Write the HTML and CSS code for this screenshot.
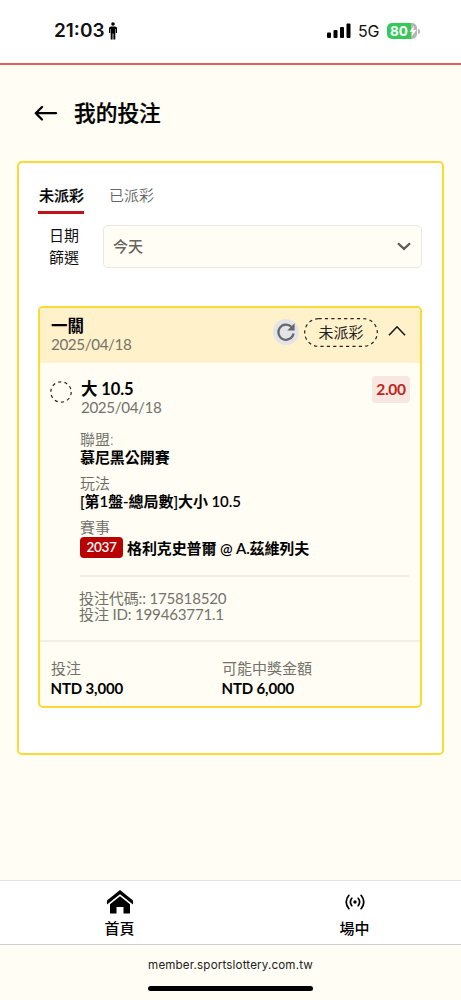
FILE: index.html
```html
<!DOCTYPE html>
<html lang="zh-Hant">
<head>
<meta charset="utf-8">
<meta name="viewport" content="width=device-width, initial-scale=1">
<title>我的投注</title>
<link rel="stylesheet" href="styles.css">
</head>
<body>
<div class="screen">
  <header class="status">
    <span class="clock">21:03</span>
    <svg class="person" width="10" height="18" viewBox="0 0 10 18"><circle cx="5" cy="2" r="1.8"/><path d="M3 4.500h4q2 0 2 2v4.600h-1.200V7h-.5v10.500H5.400v-6h-.8v6H2.700V7h-.5v4.100H1V6.500q0-2 2-2z"/></svg>
    <svg class="signal" width="24" height="16" viewBox="0 0 24 16"><rect x="0" y="9.500" width="4" height="5.500" rx="1"/><rect x="6.500" y="7" width="4" height="8" rx="1"/><rect x="13" y="4" width="4" height="11" rx="1"/><rect x="19.500" y="0.500" width="4" height="14.500" rx="1"/></svg>
    <span class="network">5G</span>
    <span class="battery"><span class="level">80</span>
      <svg class="bolt" width="8" height="12" viewBox="0 0 8 12"><path d="M5 0.500L0.500 6.800H3.500L2.500 11.500L7.500 5H4.300z" fill="#fff"/></svg>
    </span>
    <span class="battery-tip"></span>
  </header>

  <div class="title-bar">
    <svg width="24" height="18" viewBox="0 0 24 18" fill="none" stroke="#000" stroke-width="2.300" stroke-linecap="round" stroke-linejoin="round"><path d="M22 9.200H1.800M8 3L1.800 9.200L8 15.500"/></svg>
    <h1>我的投注</h1>
  </div>

  <main class="panel">
    <nav class="tabs"><a class="tab active">未派彩</a><a class="tab">已派彩</a></nav>
    <div class="filter">
      <label>日期<br>篩選</label>
      <div class="select"><span>今天</span>
        <svg width="14" height="9" viewBox="0 0 14 9" fill="none" stroke="#5c5a56" stroke-width="2.200"><path d="M1 1.300L7 6.900L13 1.300"/></svg>
      </div>
    </div>

    <article class="bet">
      <div class="bet-head">
        <div class="bet-name"><strong>一關</strong><span class="date">2025/04/18</span></div>
        <span class="refresh"><svg width="20" height="20" viewBox="0 0 20 20"><path d="M15.600 5A7.600 7.600 0 1 0 17.500 11.500" fill="none" stroke="#66676b" stroke-width="2.200"/><path d="M18.600 1.200V8.500H11.300z" fill="#66676b"/></svg></span>
        <span class="state"><svg class="dash" width="74" height="29"><rect x=".7" y=".7" width="72.600" height="27.600" rx="13.800"/></svg>未派彩</span>
        <svg class="fold" width="18" height="12" viewBox="0 0 18 12" fill="none" stroke="#171717" stroke-width="1.600"><path d="M1 10.200L9 1.800L17 10.200"/></svg>
      </div>
      <div class="bet-body">
        <svg class="ring" width="22" height="22" viewBox="0 0 22 22"><circle cx="11" cy="11" r="10.200"/></svg>
        <div class="details">
          <div class="pick"><div><strong>大 10.5</strong><span class="date">2025/04/18</span></div><b class="odds">2.00</b></div>
          <dl>
            <dt>聯盟:</dt><dd>慕尼黑公開賽</dd>
            <dt>玩法</dt><dd>[第1盤-總局數]大小 10.5</dd>
            <dt>賽事</dt><dd class="match"><span class="code">2037</span><span>格利克史普爾 @ A.茲維列夫</span></dd>
          </dl>
          <div class="ids"><div>投注代碼:: 175818520</div><div>投注 ID: 199463771.1</div></div>
        </div>
      </div>
      <div class="totals">
        <div><span>投注</span><b>NTD 3,000</b></div>
        <div><span>可能中獎金額</span><b>NTD 6,000</b></div>
      </div>
    </article>
  </main>

  <nav class="bottom-nav">
    <a><svg width="26" height="24" viewBox="0 0 26 24"><path d="M13 0L26 10.500V14.500L13 4.200L0 14.500V10.500z"/><path d="M13 6.300L23 14.300V23.500H16.500V17H9.500V23.500H3V14.300z"/></svg><span>首頁</span></a>
    <a class="live"><svg width="20" height="16" viewBox="0 0 20 16" fill="none" stroke="#000" stroke-width="1.700" stroke-linecap="round"><circle cx="10" cy="8" r="1.700" fill="#000" stroke="none"/><path d="M6.800 4.300Q4 8 6.800 11.700M13.200 4.300Q16 8 13.200 11.700M3.900 1.300Q-1.500 8 3.900 14.700M16.100 1.300Q21.500 8 16.100 14.700"/></svg><span>場中</span></a>
  </nav>
  <footer class="browser"><span>member.sportslottery.com.tw</span><i class="home-bar"></i></footer>
</div>
</body>
</html>
```
FILE: styles.css
```css
* { box-sizing: border-box; }
body { margin: 0; background: #fffdf4; color: #111; font-family: Lato, "Noto Sans CJK TC", sans-serif; font-size: 15px; }
svg { display: block; flex: none; }
.screen { width: 461px; height: 1000px; display: flex; flex-direction: column; overflow: hidden; white-space: nowrap; }

.status { height: 65px; flex: none; display: flex; align-items: center; padding: 1px 41px 2px 54px; background: #fff; border-bottom: 2px solid #e45c5c; font-family: Inter, sans-serif; }
.clock { font-size: 19px; font-weight: 600; line-height: 24px; width: 54px; }
.signal { margin-left: auto; }
.network { font-size: 16px; letter-spacing: -.2px; margin: 0 8px 0 7px; width: 21px; }
.battery { width: 30px; height: 16px; border-radius: 5px; background: linear-gradient(90deg, #34ca59 24px, #b5b5b5 24px); display: flex; align-items: center; padding-left: 3px; color: #fff; }
.level { font-size: 13.500px; font-weight: 700; line-height: 16px; width: 18px; }
.bolt { margin-left: 1px; }
.battery-tip { width: 2px; height: 5px; border-radius: 0 2px 2px 0; background: #b5b5b5; margin-left: 1px; }

.title-bar { height: 96px; flex: none; padding: 0 0 0 34px; display: flex; align-items: center; gap: 16px; }
.title-bar h1 { margin: 0; font-size: 21.700px; line-height: 32px; font-weight: 500; color: #000; -webkit-text-stroke: .25px #000; }

.panel { margin: 0 17px; height: 594px; flex: none; border: 2px solid #ffd933; border-radius: 5px; background: #fff; padding: 18px 20px 0 19px; }
.tabs { display: flex; gap: 25px; margin-bottom: 11px; }
.tab { height: 33px; line-height: 28px; color: #666; font-weight: 350; border-bottom: 3.500px solid transparent; }
.tab.active { padding-left: 1px; color: #000; font-weight: 500; -webkit-text-stroke: .2px #000; border-color: #c21217; }
.filter { display: flex; height: 43px; }
.filter label { width: 65px; padding-left: 11px; line-height: 22px; margin-top: -1px; }
.select { flex: 1; border: 1px solid #eae6e2; border-radius: 5px; background: #fffdf4; padding: 0 10px 0 9px; display: flex; align-items: center; justify-content: space-between; color: #666560; font-weight: 500; }
.select span { margin-top: -2px; }

.bet { margin-top: 38px; height: 402px; border: 2px solid #ffd933; border-radius: 5px; background: #fffdf4; overflow: hidden; }
.bet-head { height: 55px; background: #fff1ca; padding: 0 14px 7px 11px; display: flex; align-items: center; }
.bet-name { display: flex; flex-direction: column; margin-right: auto; padding-top: 4px; }
strong { font-size: 16.500px; line-height: 19px; font-weight: 700; color: #000; display: block; }
.date { display: block; font-size: 15.200px; letter-spacing: -.38px; line-height: 16px; color: #74736b; }
.refresh { width: 26px; height: 26px; border-radius: 50%; background: #e3e4e8; display: grid; place-items: center; margin-top: -1px; }
.state { position: relative; width: 74px; height: 29px; line-height: 28px; text-align: center; margin: 0 10px 0 5px; color: #222; }
.dash { position: absolute; inset: 0; }
.dash rect, .ring circle { fill: none; stroke: #222; stroke-width: 1.200; stroke-dasharray: 3.200 3.200; }
.fold { margin-top: -2px; }
.bet-body { height: 277px; display: flex; padding: 17px 11px 0 10px; gap: 8px; }
.ring { margin-top: 1px; }
.details { flex: 1; }
.pick { display: flex; justify-content: space-between; height: 50px; }
.pick strong { padding-left: 1px; letter-spacing: -.1px; }
.pick .date { padding-left: 1px; }
.odds { width: 38px; height: 27px; margin: -4px -1px 0 0; border-radius: 4px; background: #f8e7e0; color: #bd2520; text-align: center; line-height: 27px; font-size: 15.500px; letter-spacing: -.3px; }
dl { margin: 0; color: #000; }
dt { line-height: 18px; color: #6c6b64; font-weight: 350; }
dd { margin: 0 0 8px; line-height: 18px; font-weight: 600; letter-spacing: -.07px; }
.match { display: flex; align-items: center; height: 22px; gap: 4px; margin: 0 0 17px; }
.match > span:last-child { padding-top: 1px; letter-spacing: -.12px; }
.code { width: 43px; height: 21px; border-radius: 4px; background: #b90000; color: #fff; text-align: center; font-size: 13.500px; line-height: 21px; letter-spacing: -.3px; }
.ids { border-top: 2px solid #f1ede7; padding-top: 13px; text-indent: -1px; line-height: 16px; color: #74736b; font-size: 15.100px; letter-spacing: -.2px; }
.totals { border-top: 2px solid #f1ede7; height: 66px; display: flex; padding: 16px 0 0 11px; color: #74736b; }
.totals div { width: 171px; }
.totals span, .totals b { display: block; line-height: 20px; }
.totals b { color: #000; letter-spacing: -.15px; margin-left: -.5px; }

.bottom-nav { height: 65px; flex: none; margin-top: 125px; background: #fff; border-top: 1px solid #e3e1dd; border-bottom: 1px solid #d0d0ce; display: flex; justify-content: space-between; padding: 9px 91px 0 104px; }
.bottom-nav a { width: 31px; display: flex; flex-direction: column; align-items: center; color: #000; font-weight: 500; line-height: 20px; }
.bottom-nav svg { margin-bottom: 4px; }
.bottom-nav .live svg { margin: 4px 0 8px; }
.browser { flex: 1; display: flex; flex-direction: column; align-items: center; padding-top: 12px; font: 11.600px/16px Inter, sans-serif; letter-spacing: .16px; color: #222; }
.home-bar { width: 165px; height: 5px; margin-top: 13px; border-radius: 3px; background: #000; }
```
